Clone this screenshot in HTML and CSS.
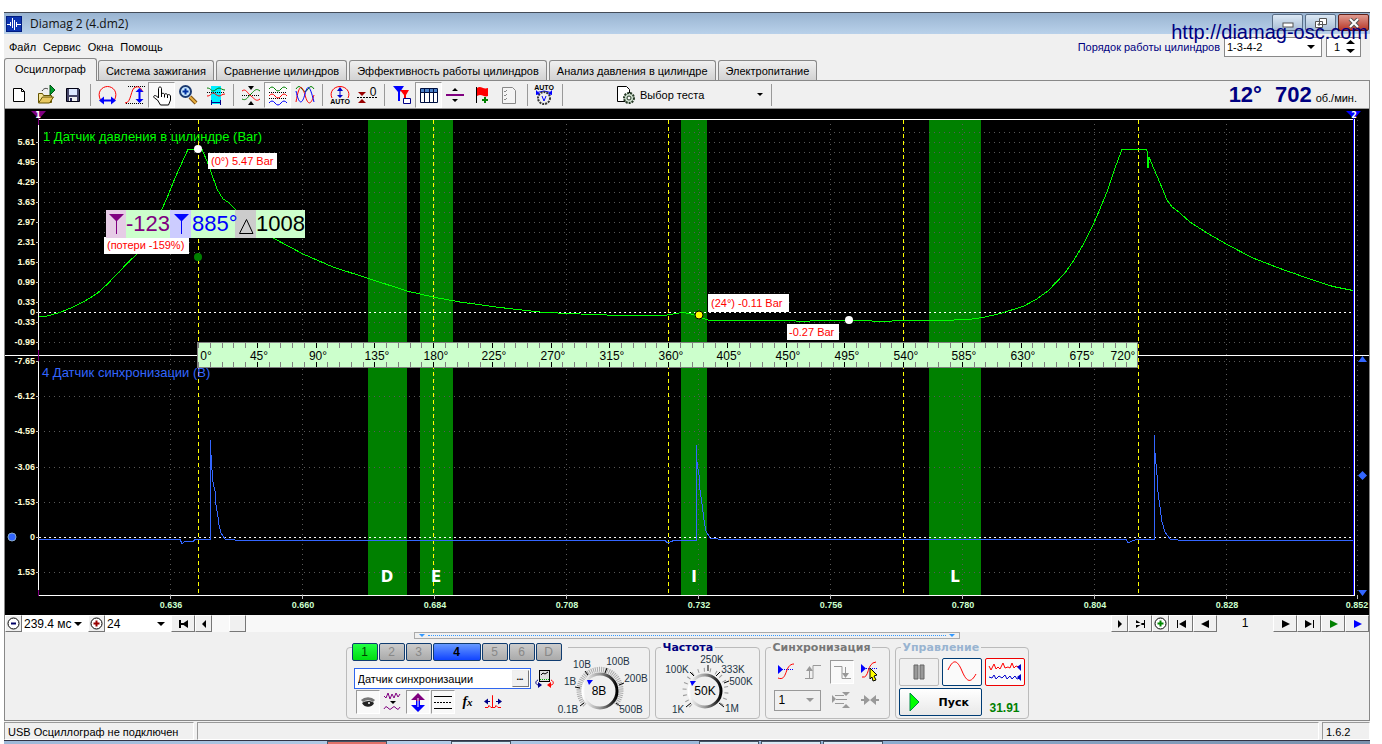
FILE: index.html
```html
<!DOCTYPE html>
<html lang="ru">
<head>
<meta charset="utf-8">
<title>Diamag 2 (4.dm2)</title>
<link rel="stylesheet" href="styles.css">
</head>
<body>
<div class="window">
  <header class="titlebar">
    <svg class="app-icon" width="16" height="16" viewBox="0 0 16 16"><rect width="16" height="16" fill="#001c80"/><rect x="1" y="1" width="14" height="14" fill="#0c34b0"/><path d="M1 8.500h4M11 8.500h4" stroke="#fff"/><path d="M4.500 6v4M6.500 2v10M8.500 4v10M10.500 6v5" stroke="#fff"/></svg>
    <h1 class="title">Diamag 2 (4.dm2)</h1>
    <div class="win-buttons">
      <button class="win-btn" aria-label="Свернуть"><svg width="12" height="10"><rect x="1" y="5" width="10" height="4" fill="#fff" stroke="#555"/></svg></button>
      <button class="win-btn" aria-label="Восстановить"><svg width="12" height="10"><path d="M4.500 .5h7v6h-7z M.5 3.500h7v6h-7z M3 6h2v1h-2z" fill="#fff" stroke="#555"/></svg></button>
      <button class="win-btn close" aria-label="Закрыть"><svg width="12" height="10"><path d="M2 1l8 8M10 1l-8 8" stroke="#555" stroke-width="4"/><path d="M2 1l8 8M10 1l-8 8" stroke="#fff" stroke-width="2"/></svg></button>
    </div>
    <a class="site" href="#">http://diamag-osc.com</a>
  </header>

  <div class="menubar">
    <nav class="menu"><a href="#">Файл</a><a href="#">Сервис</a><a href="#">Окна</a><a href="#">Помощь</a></nav>
    <div class="order">
      <label for="order">Порядок работы цилиндров</label>
      <span class="combo order-combo"><select id="order"><option>1-3-4-2</option></select></span>
      <span class="spin"><input aria-label="Цилиндр" value="1"><svg width="9" height="14" viewBox="0 0 9 14"><path d="M0 4h9L4.500 0zM0 9h9l-4.500 4z"/></svg></span>
    </div>
  </div>

  <div class="tabs" role="tablist">
    <button class="tab active" role="tab">Осциллограф</button>
    <button class="tab" role="tab">Система зажигания</button>
    <button class="tab" role="tab">Сравнение цилиндров</button>
    <button class="tab" role="tab">Эффективность работы цилиндров</button>
    <button class="tab" role="tab">Анализ давления в цилиндре</button>
    <button class="tab" role="tab">Электропитание</button>
  </div>

  <div class="frame">
  <div class="toolbar">
    <button class="tool" aria-label="Новый"><svg viewBox="0 0 24 24"><path d="M6.500 5.500h8l3 3v10h-11z" fill="#fff" stroke="#000"/><path d="M14.500 5.500v3h3" fill="none" stroke="#000"/></svg></button>
    <button class="tool" aria-label="Открыть"><svg viewBox="0 0 24 24"><path d="M4.500 19.500v-9h4l1 2h8v7z" fill="#f4e49a" stroke="#665500"/><path d="M4.500 20l4-6h11l-4 6z" fill="#e8c860" stroke="#665500"/><path d="M8 8c2-3 4-3 6-2" fill="none" stroke="#333"/><path d="M16 2l5 5-5 5z" fill="#00a030" stroke="#005010"/></svg></button>
    <button class="tool" aria-label="Сохранить"><svg viewBox="0 0 24 24"><path d="M5.500 5.500h12l1 1v12h-13z" fill="#446" stroke="#001"/><path d="M8 6h8v6h-8z" fill="#dde8ff"/><path d="M8 14h8v4h-8z" fill="#eee"/><path d="M9 15h2v3h-2z" fill="#225"/></svg></button>
    <i class="sep"></i>
    <button class="tool" aria-label="Ширина"><svg viewBox="0 0 24 24"><path d="M4.500 17C.5 9 6 3.500 11.500 3.500S22.500 9 18.500 17" fill="none" stroke="#f00"/><path d="M6 17.500h12" stroke="#00f" stroke-width="2"/><path d="M3 17.500l5-4v8zM20 17.500l-5-4v8z" fill="#00f"/></svg></button>
    <button class="tool" aria-label="Высота"><svg viewBox="0 0 24 24"><path d="M5 3.500h17M3 20.500h17" stroke="#000" stroke-dasharray="1 1"/><path d="M2 20c7 0 5-15 11-16 4-1 5 2 7 5" fill="none" stroke="#f00"/><path d="M16.500 8v8" stroke="#00f" stroke-width="2"/><path d="M16.500 5l-4 4h8zM16.500 20l-4-4h8z" fill="#00f"/></svg></button>
    <button class="tool pressed" aria-label="Рука"><svg viewBox="0 0 24 24"><path d="M8.500 15V5.500c0-2 3-2 3 0V11c0-1 3-1 3 .5 0-1 3-1 3 .5 1-1 3 0 3 1v4l-2 5h-8l-3-5-3-2c-2-2 0-3 2-2z" fill="#fff" stroke="#000"/><path d="M11.500 11v3M14.500 11.500v3M17.500 12v3" stroke="#000"/></svg></button>
    <button class="tool" aria-label="Лупа"><svg viewBox="0 0 24 24"><path d="M13 14l6 6" stroke="#805010" stroke-width="4"/><path d="M13 14l6 6" stroke="#e8b040" stroke-width="2"/><circle cx="8.500" cy="8.500" r="5.500" fill="#c8e8ff" stroke="#1b3a70" stroke-width="2"/><path d="M5.500 8.500h6M8.500 5.500v6" stroke="#0030a0" stroke-width="2"/></svg></button>
    <button class="tool" aria-label="Фрагмент"><svg viewBox="0 0 24 24"><path d="M7 3h10v18h-10z" fill="#0ef"/><path d="M3 5c4 0 4 3 6 3s4-3 6-3 3 2 6 2" fill="none" stroke="#008000"/><path d="M3 9.500h18" stroke="#000" stroke-dasharray="1 1"/><path d="M3 13c4 0 4-3 6-3s4 3 6 3 3-2 6-2" fill="none" stroke="#f00"/><path d="M8 19.500h8M7.500 17v5M16.500 17v5" stroke="#008" stroke-width="1"/></svg></button>
    <i class="sep"></i>
    <button class="tool" aria-label="Совместить"><svg viewBox="0 0 24 24"><path d="M3 12.500h18" stroke="#000" stroke-dasharray="1 1"/><path d="M3 16c4 2 5-1 9-5s5-6 9-3" fill="none" stroke="#008000"/><path d="M3 8c4-3 5 2 9 5s5 6 9 3" fill="none" stroke="#f00"/><path d="M9 3h6l-3 4zM9 22h6l-3-4z"/></svg></button>
    <button class="tool pressed" aria-label="Раздельно"><svg viewBox="0 0 24 24"><path d="M3 6q3-4 6 0t6 0 6 0" fill="none" stroke="#008000"/><path d="M3 9.500h18M3 15.500h18" stroke="#000" stroke-dasharray="1 1"/><path d="M3 13q3-4 6 0t6 0 6 0" fill="none" stroke="#f00"/><path d="M3 20q3-4 6 0t6 0 6 0" fill="none" stroke="#00f"/></svg></button>
    <button class="tool" aria-label="Наложение"><svg viewBox="0 0 24 24"><path d="M3 6q3-5 6 0t6 0 6 0" fill="none" stroke="#008000"/><path d="M3 19C6 1 9 1 12 12s6 10 9 0" fill="none" stroke="#f00"/><path d="M3 8c3 14 6 14 9 3s5-8 9 8" fill="none" stroke="#00f"/></svg></button>
    <i class="sep"></i>
    <button class="tool" aria-label="Авто"><svg viewBox="0 0 24 24"><path d="M4 15C1 9 6 3.500 12 3.500S23 9 20 15" fill="none" stroke="#f00"/><path d="M12 6v8" stroke="#00c"/><path d="M9 8l3-4 3 4zM9 12h6l-3 3z" fill="#00c"/><text x="12" y="21" class="micro">AUTO</text></svg></button>
    <button class="tool" aria-label="Ноль"><svg viewBox="0 0 24 24"><path d="M2 14.500h20" stroke="#000" stroke-dasharray="2 1"/><path d="M3 9h8l-4 4zM3 20h8l-4-4z" fill="#900"/><text x="18" y="13" class="zero">0</text></svg></button>
    <i class="sep"></i>
    <button class="tool" aria-label="Маркеры"><svg viewBox="0 0 24 24"><path d="M3 3h11l-4 6v9h-2v-9z" fill="#00f"/><path d="M10 7h9l-3 5v5h-2v-5z" fill="#f00"/><path d="M13.500 15.500h7v5h-7z" fill="#fff" stroke="#008"/></svg></button>
    <button class="tool pressed" aria-label="Таблица"><svg viewBox="0 0 24 24"><path d="M3.500 5.500h17v14h-17z" fill="#fff" stroke="#001040"/><path d="M4 6h16v3h-16z" fill="#4a80c8"/><path d="M3.500 9.500h17M7.500 6v13M12.500 6v13M16.500 6v13" stroke="#001040"/></svg></button>
    <button class="tool" aria-label="Уровень"><svg viewBox="0 0 24 24"><path d="M2 12h18" stroke="#800080" stroke-width="2"/><path d="M8 8h6l-3-3zM8 16h6l-3 3z"/></svg></button>
    <button class="tool" aria-label="Метка"><svg viewBox="0 0 24 24"><path d="M5.500 4v16" stroke="#000"/><path d="M6 5c4-3 6 2 11 0v8c-4 2-6-3-11 0z" fill="#f00"/><path d="M11 17h6M14 14v6" stroke="#008000" stroke-width="2"/></svg></button>
    <button class="tool" aria-label="Список"><svg viewBox="0 0 24 24"><path d="M4.500 4.500h10l3 3v13h-13z" fill="#f4f4f4" stroke="#888"/><path d="M6 8l1 1 2-2M6 12l1 1 2-2M6 16l1 1 2-2" fill="none" stroke="#888"/></svg></button>
    <i class="sep"></i>
    <button class="tool" aria-label="Авто вольт"><svg viewBox="0 0 24 24"><text x="11" y="7" class="micro">AUTO</text><path d="M4 9.500q7-3 14 0" fill="none" stroke="#00f"/><circle cx="11" cy="15" r="6" fill="#eee" stroke="#333" stroke-width="2" stroke-dasharray="2 1"/><path d="M3 12V7l4 4zM19 12V7l-4 4z" fill="#00f"/><path d="M9 13l2 5 2-5" fill="none" stroke="#00f"/></svg></button>
    <i class="sep"></i>
    <button class="test"><svg viewBox="0 0 24 24"><path d="M4.500 3.500h9l3 3v12h-12z" fill="#fff" stroke="#000"/><circle cx="16" cy="15" r="5" fill="#cdc" stroke="#243824" stroke-width="2" stroke-dasharray="2 1"/><circle cx="16" cy="15" r="2" fill="#fff" stroke="#243824"/></svg><span>Выбор теста</span><i class="caret"></i></button>
    <i class="sep"></i>
    <div class="rpm"><b>12°</b><b>702</b><span>об./мин.</span></div>
  </div>

  <svg class="scope" viewBox="5 109 1364 506">
    <rect x="5" y="109" width="1364" height="506" fill="#000"/>
    <g fill="#008000"><rect x="368" y="120" width="39" height="475"/><rect x="420" y="120" width="33" height="475"/><rect x="681" y="120" width="26" height="475"/><rect x="929" y="120" width="52" height="475"/></g>
    <path class="grid" d="M44 132.500H1352M44 142.500H1352M44 152.500H1352M44 162.500H1352M44 172.500H1352M44 182.500H1352M44 192.500H1352M44 202.500H1352M44 212.500H1352M44 222.500H1352M44 232.500H1352M44 242.500H1352M44 252.500H1352M44 262.500H1352M44 272.500H1352M44 282.500H1352M44 292.500H1352M44 302.500H1352M44 322.500H1352M44 332.500H1352M44 342.500H1352M44 361.500H1352M44 396.500H1352M44 431.500H1352M44 467.500H1352M44 502.500H1352M44 572.500H1352"/>
    <path class="grid" d="M170.500 124V595M302.500 124V595M434.500 124V595M566.500 124V595M698.500 124V595M830.500 124V595M962.500 124V595M1094.500 124V595M1226.500 124V595M1357.500 120V595"/>
    <path class="zero-line" d="M39 312.500H1353M39 537.500H1353"/>
    <path class="phase" d="M198.500 120V595M433.500 120V595M668.500 120V595M903.500 120V595M1138.500 120V595"/>
    <path class="axis" d="M38.500 119.500V595.500H1354.500V119.500H38.500M5 355.500H1369"/>
    <path class="ticks" d="M36 142.500h3M36 162.500h3M36 182.500h3M36 202.500h3M36 222.500h3M36 242.500h3M36 262.500h3M36 282.500h3M36 302.500h3M36 312.500h3M36 322.500h3M36 342.500h3M36 361.500h3M36 396.500h3M36 431.500h3M36 467.500h3M36 502.500h3M36 537.500h3M36 572.500h3M170.500 595v4M302.500 595v4M434.500 595v4M566.500 595v4M698.500 595v4M830.500 595v4M962.500 595v4M1094.500 595v4M1226.500 595v4M1357.500 595v4"/>
    <path d="M1353.500 112V595" stroke="#00f" class="crisp"/>
    <path d="M38.500 112V125M38.500 350V361M38.500 590V596" stroke="#800080" class="crisp"/>
    <path class="trace green" d="M39 317L47 316 60 312.500 73 307 85 301 97 293.500 107 284.500 118 273 128 262.500 137 254 151 232 162 209 167 198 175 178 184 158 188 149.500H202L207 161 211 172 217 189 223 199 228 202 235 209C247 219 262 230 275 239L303 254 333 267 367 278 407 291 433 297 460 302 500 307.500 540 312 567 313.500 620 315.500H664L682 312.500 690 313.500 706 319.500 710 320.500H795L797 321.500H809L811 320.500H871L873 321.500H891L893 320.500H940L968 319.500 983 317.500 1000 313.500 1023 306.500 1036 299.500 1048 291 1065 273 1074 260 1083 245 1094 223 1107 192 1115 168 1122 149.500H1146L1147 151 1148 168 1149 157 1154 169 1160 183 1167 200 1172 207 1177 210.500 1190 222 1207 233 1227 244.500 1253 258 1280 268.500 1307 278 1333 286.500 1353 290.500"/>
    <path class="trace blue" d="M39 539.500H180l2 4 3-2h8l2-2H210V440l1 15 1 15 1 12 2 9 1 14 2 12 1 8 2 8 4 6 10 1H665l2 3 3-1 5-2H696V445l1 17 2 13 1 15 2 14 2 16 2 11 4 7 8 1H1126l2 4 4-2 6-2H1154V435l1 18 2 22 1 17 2 15 2 15 3 10 5 7 8 1H1353"/>
    <g class="ylab"><text x="35" y="145">5.61</text><text x="35" y="165">4.95</text><text x="35" y="185">4.29</text><text x="35" y="205">3.63</text><text x="35" y="225">2.97</text><text x="35" y="245">2.31</text><text x="35" y="265">1.65</text><text x="35" y="285">0.99</text><text x="35" y="305">0.33</text><text x="35" y="315">0</text><text x="35" y="325">-0.33</text><text x="35" y="345">-0.99</text><text x="35" y="364">-7.65</text><text x="35" y="399">-6.12</text><text x="35" y="434">-4.59</text><text x="35" y="470">-3.06</text><text x="35" y="505">-1.53</text><text x="35" y="540">0</text><text x="35" y="575">1.53</text></g>
    <g class="xlab"><text x="171" y="608">0.636</text><text x="303" y="608">0.660</text><text x="435" y="608">0.684</text><text x="567" y="608">0.708</text><text x="699" y="608">0.732</text><text x="831" y="608">0.756</text><text x="963" y="608">0.780</text><text x="1095" y="608">0.804</text><text x="1227" y="608">0.828</text><text x="1357" y="608">0.852</text></g>
    <text class="chname" x="43" y="141" fill="#0f0">1 Датчик давления в цилиндре (Bar)</text>
    <text class="chname" x="42" y="377" fill="#36f">4 Датчик синхронизации (В)</text>
    <g class="zones"><text x="387" y="582">D</text><text x="436" y="582">E</text><text x="694" y="582">I</text><text x="955" y="582">L</text></g>
    <g class="ruler">
      <rect x="197.500" y="342.500" width="940" height="25" fill="#cfc" stroke="#808080"/>
      <path class="crisp" d="M198 345.500H1138M198 364.500H1138" stroke="#808080" stroke-width="5" stroke-dasharray="1 10.750"/>
      <path class="crisp" d="M256.750 345.500H1080M256.750 364.500H1080" stroke="#000" stroke-width="5" stroke-dasharray="1 57.750"/>
      <text x="206" y="360">0°</text><text x="259" y="360">45°</text><text x="318" y="360">90°</text><text x="377" y="360">135°</text><text x="436" y="360">180°</text><text x="494" y="360">225°</text><text x="553" y="360">270°</text><text x="612" y="360">315°</text><text x="671" y="360">360°</text><text x="729" y="360">405°</text><text x="788" y="360">450°</text><text x="847" y="360">495°</text><text x="906" y="360">540°</text><text x="964" y="360">585°</text><text x="1023" y="360">630°</text><text x="1082" y="360">675°</text><text x="1123" y="360">720°</text>
    </g>
    <g class="callout"><rect x="208" y="153" width="69" height="16"/><text x="211" y="165">(0°) 5.47 Bar</text><rect x="104" y="237" width="85" height="17"/><text x="107" y="249">(потери -159%)</text><rect x="708" y="294" width="81" height="18"/><text x="711" y="307">(24°) -0.11 Bar</text><rect x="787" y="324" width="52" height="16"/><text x="789" y="336">-0.27 Bar</text></g>
    <g class="cursors"><rect x="106" y="210" width="199" height="28" fill="#cfc"/><rect x="106" y="210" width="20" height="28" fill="#e6cce6"/><rect x="170" y="210" width="21" height="28" fill="#ccf"/><rect x="235" y="210" width="21" height="28" fill="#ccc"/>
      <path d="M109 214h15l-7 7v13h-1v-13z" fill="#800080"/><path d="M174 214h15l-7 7v13h-1v-13z" fill="#00f"/><path d="M246.500 219.500l6.500 14h-13.500z" fill="none" stroke="#000"/>
      <text x="126" y="231" fill="#800080">-123</text><text x="192" y="231" fill="#00f">885°</text><text x="256" y="231" fill="#000">1008</text></g>
    <circle cx="198" cy="149" r="4" fill="#fff"/><circle cx="198" cy="257" r="4" fill="#008000"/><circle cx="699" cy="315" r="4" fill="#ff0" stroke="#000"/><circle cx="849" cy="320" r="4" fill="#fff"/>
    <path d="M31 111h15l-7 8z" fill="#800080"/><path d="M1346 111h15l-7 8z" fill="#00f"/>
    <text class="mark" x="38" y="118">1</text><text class="mark" x="1354" y="118">2</text>
    <g fill="#36f"><circle cx="12" cy="537" r="4" stroke="#8ac"/><path d="M1358 362h9l-4.500-6zM1358 475.500l4.500-4.500 4.500 4.500-4.500 4.500zM1358 590h9l-4.500 6z"/></g>
  </svg>

  <div class="timebar">
    <button class="tb sq" aria-label="Уменьшить"><svg width="13" height="13"><circle cx="6.500" cy="6.500" r="5.500" fill="#fff" stroke="#000"/><path d="M4 6.500h5" stroke="#006" stroke-width="2"/></svg></button>
    <span class="combo span-combo"><select aria-label="Развёртка"><option>239.4 мс</option></select></span>
    <button class="tb sq" aria-label="Увеличить"><svg width="13" height="13"><circle cx="6.500" cy="6.500" r="5.500" fill="#fff" stroke="#000"/><path d="M3.500 6.500h6M6.500 3.500v6" stroke="#900" stroke-width="2"/></svg></button>
    <span class="combo span-combo"><select aria-label="Масштаб"><option>24</option></select></span>
    <button class="tb wide" aria-label="В начало"><svg width="11" height="8"><path d="M1 0h2v8H1zM10 0v8L4 4zM3 3h7v2H3z"/></svg></button>
    <button class="tb sq" aria-label="Назад"><svg width="6" height="8"><path d="M5 0v8L1 4z"/></svg></button>
    <div class="track"><span class="thumb"></span></div>
    <button class="tb sq" aria-label="Вперёд"><svg width="6" height="8"><path d="M1 0v8l4-4z"/></svg></button>
    <button class="tb wide" aria-label="В конец"><svg width="11" height="8"><path d="M1 0v8l6-4zM9 0h1v8H9zM1 3h8v2H1z"/></svg></button>
    <button class="tb sq" aria-label="Добавить"><svg width="13" height="13"><circle cx="6.500" cy="6.500" r="5.500" fill="#fff" stroke="#000"/><path d="M3.500 6.500h6M6.500 3.500v6" stroke="#080" stroke-width="2"/></svg></button>
    <button class="tb wide" aria-label="Первый кадр"><svg width="11" height="8"><path d="M1 0h1v8H1zM10 0v8L3 4z"/></svg></button>
    <button class="tb wide" aria-label="Предыдущий кадр"><svg width="9" height="8"><path d="M8 0v8L0 4z"/></svg></button>
    <output class="frame-no">1</output>
    <button class="tb wide" aria-label="Следующий кадр"><svg width="9" height="8"><path d="M1 0v8l8-4z"/></svg></button>
    <button class="tb wide" aria-label="Последний кадр"><svg width="11" height="8"><path d="M1 0v8l7-4zM9 0h1v8H9z"/></svg></button>
    <button class="tb wide" aria-label="Воспроизвести"><svg width="9" height="8"><path d="M1 0v8l8-4z" fill="#008000"/></svg></button>
    <button class="tb wide" aria-label="Воспроизвести всё"><svg width="9" height="8"><path d="M1 0v8l8-4z" fill="#00f"/></svg></button>
  </div>

  <div class="panel">
    <div class="splitter"><i></i><span></span><i></i></div>
    <div class="groups">
      <section class="group channel">
        <div class="channels">
          <button class="ch on">1</button><button class="ch">2</button><button class="ch">3</button><button class="ch current">4</button><button class="ch">5</button><button class="ch">6</button><button class="ch">D</button>
        </div>
        <div class="ch-body">
          <div class="sensor-row">
            <div class="sensor"><input aria-label="Датчик" value="Датчик синхронизации"><button aria-label="Выбрать">•••</button></div>
            <svg width="19" height="20" viewBox="0 0 19 20"><rect x="4.500" y="1.500" width="10" height="11" fill="#ddd" stroke="#000"/><path d="M6 6l2-2 2 1 3-2" stroke="#000" fill="none"/><path d="M5 10.500h9" stroke="#0a0" stroke-dasharray="1 1"/><path d="M3 11C0 12 0 16 4 16" fill="none" stroke="#008"/><path d="M3 13l4 3-4 3z" fill="#008"/><path d="M16 11c3 1 3 5 0 5" fill="none" stroke="#f00"/><path d="M16 13l-4 3 4 3z" fill="#f00"/></svg>
          </div>
          <div class="ch-tools">
            <button class="ct pressed" aria-label="Видимость"><svg viewBox="0 0 24 24"><path d="M6 11c3-3 9-3 12 0" fill="none" stroke="#777" stroke-width="3"/><path d="M6 13c3-2 8-3 12 0-1 4-9 6-12 0z" fill="#222"/><circle cx="13" cy="13" r="1" fill="#fff"/></svg></button>
            <button class="ct" aria-label="Фильтр"><svg viewBox="0 0 24 24"><path d="M3 6l2 2 2-5 2 6 2-5 2 4 2-5 2 4 2-3" fill="none" stroke="#800080"/><path d="M9 11h6l-3 3z"/><path d="M3 19q2-4 4-1t4 0 4 0 4-1" fill="none" stroke="#800080"/></svg></button>
            <button class="ct pressed" aria-label="Инверсия"><svg viewBox="0 0 24 24"><path d="M12 3l7 7h-5v3h-4v-3H5z" fill="#800080"/><path d="M12 22l7-7h-5v-4h-4v4H5z" fill="#00f"/><path d="M12 8v9" stroke="#fff"/></svg></button>
            <button class="ct pressed" aria-label="Линии"><svg viewBox="0 0 24 24"><path d="M3 6.500h18M3 18.500h18" stroke="#000"/><path d="M3 12.500h18" stroke="#000" stroke-dasharray="2 1"/></svg></button>
            <button class="ct fx" aria-label="Функция"><span>f<small>x</small></span></button>
            <button class="ct" aria-label="Сдвиг"><svg viewBox="0 0 24 24"><path d="M4 11.500h5M15 11.500h5" stroke="#008"/><path d="M3 11.500l4-3v6zM21 11.500l-4-3v6z" fill="#008"/><path d="M4 17.500h3l1-2 2 2h1.500V5.500v12H14l1-2 2 2h3" fill="none" stroke="#f00"/></svg></button>
          </div>
        </div>
        <svg class="knob" width="94" height="68" viewBox="556 650 94 68">
          <defs><linearGradient id="rim"><stop offset="0" stop-color="#fff"/><stop offset=".5" stop-color="#999"/><stop offset="1" stop-color="#000"/></linearGradient></defs>
          <path d="M586 706A21 21 0 1 1 616 706" fill="none" stroke="#aaa" stroke-width="5" stroke-dasharray="1 1"/>
          <circle cx="601" cy="692" r="17" fill="#f0f0f0" stroke="url(#rim)" stroke-width="3"/>
          <path d="M581 707l4-3M576 688l5 1M586 672l3 4M608 669l-2 5M625 684l-5 2M621 707l-4-3" stroke="#000"/>
          <path d="M588 681h6l-4 5z" fill="#00f"/>
          <text x="600" y="696" class="val">8В</text>
          <g class="scale"><text x="569" y="714">0.1В</text><text x="571" y="686">1В</text><text x="583" y="669">10В</text><text x="619" y="666">100В</text><text x="637" y="683">200В</text><text x="632" y="714">500В</text></g>
        </svg>
      </section>

      <section class="group freq"><h2 class="legend">Частота</h2>
        <svg width="103" height="68" viewBox="655 650 103 68">
          <path d="M690 707A21 21 0 1 1 719 707" fill="none" stroke="#999" stroke-width="4" stroke-dasharray="1 5"/>
          <circle cx="704" cy="692" r="16" fill="#f0f0f0" stroke="url(#rim)" stroke-width="3"/>
          <path d="M685 708l5-4M689 673l4 4M707 666v6M719 673l-4 4M728 682l-5 2M723 708l-5-4" stroke="#000"/>
          <path d="M689 682h6l-4 5z" fill="#00f"/>
          <text x="704" y="696" class="val">50K</text>
          <g class="scale"><text x="677" y="714">1K</text><text x="676" y="674">100K</text><text x="711" y="664">250K</text><text x="732" y="674">333K</text><text x="740" y="686">500K</text><text x="731" y="713">1M</text></g>
        </svg>
      </section>

      <section class="group sync"><h2 class="legend">Синхронизация</h2>
        <div class="sync-row">
          <button class="st" aria-label="Уровень"><svg viewBox="0 0 24 24"><path d="M4 9.500h16" stroke="#00f" stroke-dasharray="1 1"/><path d="M4 5l5 4.500-5 4.500z" fill="#00f"/><path d="M4 18c10 4 6-14 16-14" fill="none" stroke="#f00"/></svg></button>
          <button class="st" aria-label="Фронт"><svg viewBox="0 0 24 24"><path d="M3 18.500h8V5.500h8" fill="none" stroke="#999"/><path d="M7.500 18V9" stroke="#999"/><path d="M4 11l3.500-5 3.500 5z" fill="#999"/></svg></button>
          <button class="st pressed" aria-label="Спад"><svg viewBox="0 0 24 24"><path d="M4 6.500h8v12h9" fill="none" stroke="#999"/><path d="M15.500 7v9" stroke="#999"/><path d="M12 13h7l-3.500 5z" fill="#999"/></svg></button>
          <button class="st" aria-label="Захват"><svg viewBox="0 0 24 24"><path d="M4 8.500h16" stroke="#00f" stroke-dasharray="1 1"/><path d="M3 4l5 4.500-5 4.500z" fill="#00f"/><path d="M4 17c8 2 4-14 14-15" fill="none" stroke="#f00"/><path d="M12 8l7 7-3 1 2 4-3 1-1-4-2 2z" fill="#ff0" stroke="#000"/></svg></button>
        </div>
        <div class="sync-row">
          <span class="combo sync-combo"><select aria-label="Канал синхронизации"><option>1</option></select></span>
          <button class="st push" aria-label="Гистерезис"><svg viewBox="0 0 24 24"><path d="M5 7.500h9M6 11.500h11M5 15.500h9" stroke="#999"/><path d="M2 7l4 4-4 4zM12 4h8l-4 4zM12 20h8l-4-4z" fill="#999"/></svg></button>
          <button class="st" aria-label="Сжать"><svg viewBox="0 0 24 24"><path d="M3 12h6M15 12h6" stroke="#999" stroke-width="2"/><path d="M6 7l6 5-6 5zM18 7l-6 5 6 5z" fill="#999"/></svg></button>
        </div>
      </section>

      <section class="group control"><h2 class="legend">Управление</h2>
        <div class="control-grid">
          <button class="cb off" aria-label="Пауза"><svg width="14" height="16"><path d="M2 1h4v14H2zM8 1h4v14H8z" fill="#999" stroke="#666"/></svg></button>
          <button class="cb" aria-label="Синус"><svg width="30" height="22"><path d="M1 9C6-2 10-2 15 10s9 12 14 3" fill="none" stroke="#f00"/></svg></button>
          <button class="cb red" aria-label="Непрерывно"><svg width="34" height="22"><path d="M1 5l2 4 3-6 2 5 2-2 2 2 3-6 2 5 3-1 2 1 2-5 2 5 2-2 3 1" fill="none" stroke="#f00"/><path d="M1 16l3 1 2-3 2 4 3-3 3 2 3-3 2 4 3-3 2 3 3-3 2 3 3-1" fill="none" stroke="#00c"/><path d="M33 3v7l-4-4zM33 13v7l-4-4z" fill="#00c"/></svg></button>
          <button class="cb start"><svg width="12" height="20"><path d="M1 1v18l9-9z" fill="#0f0" stroke="#084"/></svg><span>Пуск</span></button>
          <output class="elapsed">31.91</output>
        </div>
      </section>
    </div>
  </div>
  </div>

  <footer class="status"><span class="pane usb">USB Осциллограф не подключен</span><span class="pane info"></span><span class="pane ver">1.6.2</span></footer>
  <div class="taskbar"><i class="task hot"></i><i class="task"></i><i class="spacer"></i><i class="task"></i><i class="task"></i><i class="task"></i></div>
</div>
</body>
</html>
```

FILE: styles.css
```css
* { box-sizing: border-box; }
body { margin: 0; background: #fff; color: #000; font: 11px/14px "Liberation Sans", Arial, sans-serif; overflow: hidden; }
button, input, select, output { font: inherit; color: inherit; padding: 0; margin: 0; border: 0; background: none; border-radius: 0; }
button svg, .app-icon { display: block; flex: none; }
h1, h2 { margin: 0; font-size: 11px; }
a { color: inherit; text-decoration: none; }
.crisp { shape-rendering: crispEdges; }

.window { margin: 12px 12px 0 4px; background: #f0f0f0; }
.titlebar { position: relative; display: flex; align-items: center; height: 22px; padding-left: 2px; border-top: 1px solid #444c58; background: linear-gradient(#99b4d1, #b9d1ea); }
.title { flex: 1; margin-left: 8px; font: 12px/16px "Open Sans", sans-serif; color: #111; }
.win-buttons { display: flex; gap: 2px; align-self: flex-start; padding: 1px 1px 0 0; }
.win-btn { display: flex; align-items: center; justify-content: center; width: 31px; height: 17px; border: 1px solid #5a6f88; border-radius: 2px; background: linear-gradient(#dce8f4, #a8bed6); }
.close { background: linear-gradient(#e09a90, #b83828); border-color: #602018; }
.site { position: absolute; right: 2px; top: 7px; z-index: 2; font-size: 20px; line-height: 24px; color: #000080; }

.menubar { display: flex; align-items: center; justify-content: space-between; height: 25px; padding: 0 9px 0 5px; }
.menu { display: flex; gap: 7px; }
.order { display: flex; align-items: center; gap: 4px; color: #000080; }
.combo { position: relative; display: flex; background: #fff; color: #000; }
.combo select { width: 100%; height: 100%; padding-left: 2px; appearance: none; }
.combo::after, .caret { content: ""; border: 4px solid transparent; border-top-color: #000; border-bottom: 0; }
.combo::after { position: absolute; right: 6px; top: 50%; margin-top: -2px; pointer-events: none; }
.order-combo { width: 98px; height: 20px; border: 1px solid #888; }
.spin { display: flex; align-items: center; width: 35px; height: 20px; border: 1px solid #888; background: #fff; color: #000; }
.spin input { flex: 1; min-width: 0; padding-left: 7px; }
.spin svg { margin-right: 5px; }

.tabs { display: flex; align-items: flex-end; gap: 2px; height: 21px; }
.tab { height: 20px; padding: 0 7px; border: 1px solid #888; border-bottom: 0; border-radius: 3px 3px 0 0; background: linear-gradient(#f0f0f0, #d2d2d2); white-space: nowrap; }
.tab.active { height: 23px; margin: 0 -1px -1px 0; padding: 0 10px 2px; background: #f0f0f0; position: relative; }

.frame { border: 1px solid #888; }
.toolbar { display: flex; align-items: center; height: 28px; border-bottom: 1px solid #999; }
.tool { width: 27px; height: 26px; display: flex; align-items: center; justify-content: center; }
.tool svg, .ct svg, .st svg, .test svg { width: 24px; height: 24px; }
.pressed { border: 1px solid; border-color: #999 #fff #fff #999; background: #f9f9f9; }
.sep { width: 1px; height: 22px; margin: 0 3px 0 4px; background: #999; }
.test { display: flex; align-items: center; gap: 3px; width: 154px; margin-left: 47px; text-align: left; }
.test .caret { margin: 0 4px 0 auto; border-width: 3px 3px 0; }
.rpm { display: flex; align-items: baseline; margin-left: auto; padding-right: 12px; color: #000080; }
.rpm b { margin-right: 13px; font-size: 22px; line-height: 26px; }
.rpm b + b { margin-right: 4px; }
.rpm span { color: #000; }
.micro { font: bold 7px "Liberation Sans", sans-serif; text-anchor: middle; }
.zero { font: 12px "Liberation Sans", sans-serif; text-anchor: middle; }

.scope { display: block; width: 100%; height: auto; font-family: "Liberation Sans", Arial, sans-serif; }
.grid { stroke: #585858; stroke-dasharray: 1 4; shape-rendering: crispEdges; }
.zero-line { stroke: #fff; stroke-dasharray: 2 3; shape-rendering: crispEdges; }
.phase { stroke: #ff0; stroke-dasharray: 4 3; shape-rendering: crispEdges; }
.axis { fill: none; stroke: #fff; shape-rendering: crispEdges; }
.ticks { stroke: #bbb; shape-rendering: crispEdges; }
.trace { fill: none; stroke-width: 1; shape-rendering: crispEdges; }
.trace.green { stroke: #0f0; }
.trace.blue { stroke: #36f; }
.ylab, .xlab { font-size: 9px; font-weight: bold; fill: #ffffd8; text-anchor: end; }
.xlab { fill: #cfc; text-anchor: middle; }
.chname { font-size: 13px; }
.zones { font: bold 15px "DejaVu Sans", sans-serif; fill: #fff; text-anchor: middle; }
.ruler { font-size: 12px; text-anchor: middle; }
.callout { font-size: 11px; fill: #f00; }
.callout rect { fill: #fff; }
.cursors { font-size: 22px; }
.mark { font: bold 8px "DejaVu Sans", sans-serif; fill: #fff; text-anchor: middle; }

.timebar { display: flex; height: 17px; }
.tb { display: flex; flex: none; align-items: center; justify-content: center; border: 1px solid; border-color: #fff #777 #777 #fff; background: #f0f0f0; }
.sq { width: 17px; }
.wide { width: 24px; }
.span-combo { width: 66px; font-size: 12px; }
.track { flex: 1; padding-left: 17px; background: #f8f8f8; }
.thumb { display: block; width: 17px; height: 17px; border: 1px solid; border-color: #fff #777 #777 #fff; background: #f0f0f0; }
.frame-no { width: 56px; text-align: center; font-size: 12px; line-height: 17px; }

.panel { display: flex; flex-direction: column; align-items: center; height: 88px; }
.splitter { display: flex; align-items: center; width: 546px; height: 7px; padding: 0 4px; border: 1px solid #aaa; }
.splitter span { flex: 1; margin: 0 3px; border-top: 1px dotted #39f; }
.splitter i { border: 3px solid transparent; border-top-color: #39f; border-bottom: 0; }
.groups { display: flex; gap: 5px; margin-top: 8px; }
.group { position: relative; height: 72px; border: 1px solid #bbb; border-radius: 4px; }
.legend { position: absolute; left: 5px; top: -7px; padding: 0 2px; background: #f0f0f0; font: bold 11px/14px "DejaVu Sans", sans-serif; white-space: nowrap; }
.channel { display: flex; width: 304px; }
.channels { position: absolute; left: 5px; top: -5px; z-index: 1; display: flex; gap: 1px; padding-right: 6px; background: #f0f0f0; }
.ch { width: 26px; height: 18px; border: 1px solid #103c70; border-radius: 2px; background: linear-gradient(#ccc, #aaa); color: #888; font-size: 12px; }
.ch.on { background: linear-gradient(#2f4, #0d1); color: #040; }
.ch.current { width: 48px; background: linear-gradient(#69f, #14f); color: #000; font-weight: bold; }
.ch-body { width: 208px; padding: 20px 0 0 7px; }
.sensor-row { display: flex; gap: 4px; align-items: center; }
.sensor { display: flex; width: 177px; height: 21px; border: 1px solid #2f66ee; background: #fff; }
.sensor input { flex: 1; min-width: 0; padding-left: 3px; }
.sensor button { width: 17px; margin: 1px; border: 1px solid; border-color: #eee #777 #777 #eee; background: #f0f0f0; font-size: 6px; }
.ch-tools { display: flex; gap: 1px; margin: 1px 0 0 2px; }
.ct { display: flex; align-items: center; justify-content: center; width: 24px; height: 24px; }
.fx { font: italic bold 14px/20px "Liberation Serif", serif; }
.fx small { font-size: 11px; }
.knob { flex: none; margin-top: 1px; }
.scale { font-size: 10px; text-anchor: middle; fill: #234; }
.val { font-size: 12px; text-anchor: middle; }
.freq { width: 105px; }
.freq svg { display: block; margin-top: 1px; }
.freq .legend { color: #000080; }
.sync { width: 125px; padding: 10px 0 0 8px; }
.sync .legend { color: #777; }
.sync-row { display: flex; align-items: center; gap: 4px; height: 28px; }
.st { display: flex; align-items: center; justify-content: center; width: 24px; height: 24px; }
.sync-combo { width: 47px; height: 21px; margin-right: 5px; border: 1px solid #999; background: #f0f0f0; font-size: 12px; }
.sync-combo select { padding-left: 4px; }
.sync-combo::after { border-top-color: #999; }
.control { width: 134px; }
.control .legend { color: #99b4d1; }
.control-grid { display: grid; grid-template-columns: repeat(3, 40px); gap: 2px 3px; padding: 10px 0 0 3px; }
.cb { display: flex; align-items: center; justify-content: center; height: 28px; border: 1px solid #003c74; border-radius: 2px; background: #fafafa; }
.cb.off { border-color: #bbb; background: #f0f0f0; }
.cb.red { border-color: #e00; }
.start { grid-column: span 2; justify-content: flex-start; gap: 18px; padding-left: 9px; background: linear-gradient(#fff, #e8e8e8); font: bold 11px "DejaVu Sans", sans-serif; }
.elapsed { align-self: center; padding-top: 12px; text-align: center; color: #008000; font: bold 12px/14px "Liberation Sans", sans-serif; }

.status { display: flex; gap: 3px; padding-top: 1px; }
.pane { height: 18px; padding: 2px 3px 0; border: 1px solid; border-color: #999 #fff #fff #999; line-height: 14px; }
.usb { width: 190px; }
.info { flex: 1; }
.ver { width: 48px; }
.taskbar { display: flex; gap: 64px; height: 4px; padding: 0 487px 0 323px; border-top: 1px solid #334; background: linear-gradient(90deg, #9db8d8, #b4cde8 30%, #8fb0d4 60%, #7890ac); }
.task { flex: none; width: 60px; border: 1px solid #456; border-bottom: 0; background: #dce8f4; }
.task + .task { margin-right: -2px; }
.spacer { flex: none; width: 62px; }
.spacer ~ .task { margin-right: -62px; }
.hot { background: #e07068; }
```
